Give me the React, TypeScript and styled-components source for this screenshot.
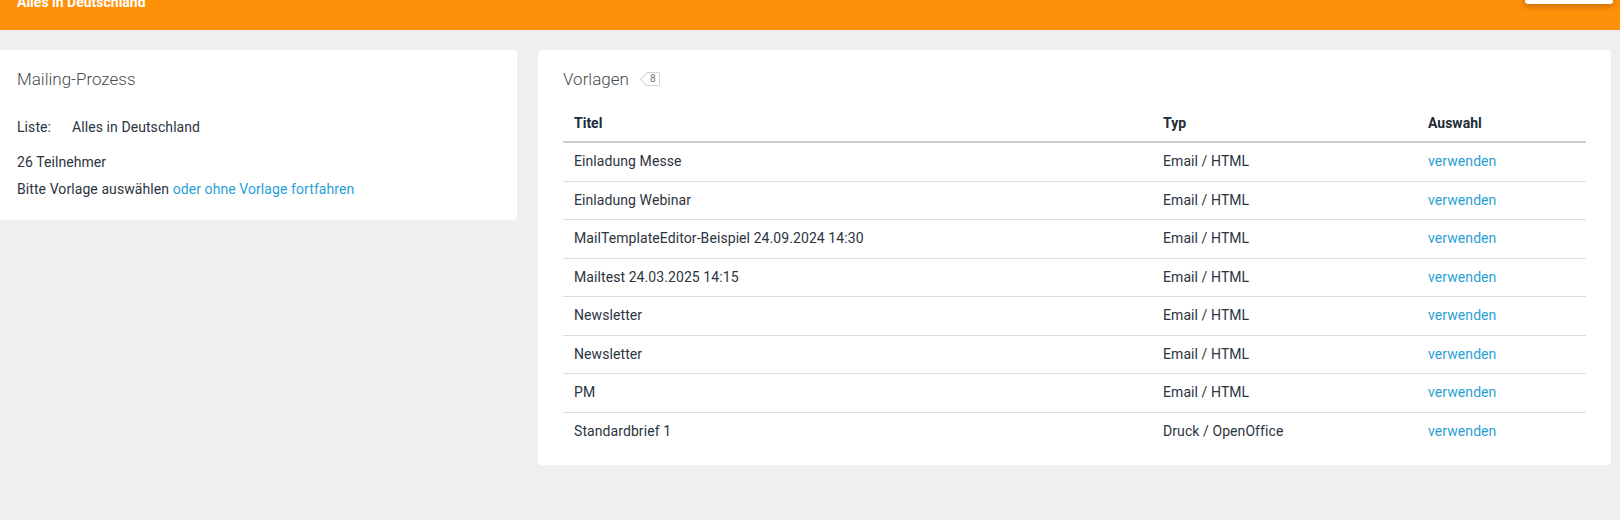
import styled, { createGlobalStyle } from "styled-components";

const GlobalStyle = createGlobalStyle`
  html, body {
    margin: 0;
    padding: 0;
    background: #efeff1;
    font-family: Roboto, "Liberation Sans", Arial, sans-serif;
    font-size: 14px;
    color: #2b3441;
    overflow: hidden;
  }
`;

const Page = styled.div`
  width: 1620px;
  height: 520px;
  overflow: hidden;
`;

const Topbar = styled.header`
  height: 30px;
  background: #ff9009;
  display: flex;
  justify-content: space-between;
  align-items: flex-start;
  padding: 0 7px 0 17px;
  overflow: hidden;
`;

const TopTitle = styled.div`
  color: #fff;
  font-weight: 700;
  font-size: 14px;
  line-height: 20px;
  margin-top: -8px;
`;

const TopButton = styled.div`
  width: 88px;
  height: 30px;
  margin-top: -26px;
  background: #fff;
  border-radius: 3px;
  box-shadow: 0 2px 6px rgba(120, 60, 0, 0.45);
`;

const Content = styled.main`
  display: flex;
  align-items: flex-start;
  gap: 21px;
  margin-left: -8px;
  padding: 20px 9px 0 0;
`;

const Card = styled.section<{ $width?: number; $padBottom: number }>`
  background: #fff;
  border-radius: 4px;
  padding: 18px 25px ${({ $padBottom }) => $padBottom}px;
  box-sizing: border-box;
  ${({ $width }) => ($width ? `width: ${$width}px;` : "flex: 1;")}
`;

const CardTitle = styled.h2`
  margin: 0;
  font-size: 17px;
  font-weight: 300;
  line-height: 22px;
  color: #474c52;
  display: flex;
  align-items: center;
`;

const Line = styled.div<{ $gap: number }>`
  line-height: 20px;
  margin-top: ${({ $gap }) => $gap}px;
  letter-spacing: 0.08px;
`;

const Label = styled.span`
  display: inline-block;
  width: 55px;
`;

const Link = styled.a`
  color: #2a9fd6;
  text-decoration: none;
  cursor: pointer;
`;

const Badge = styled.span`
  position: relative;
  display: inline-block;
  margin-left: 17px;
  height: 12px;
  min-width: 8px;
  padding: 0 2px 0 3px;
  border: 1px solid #cfd2d6;
  border-left: none;
  border-radius: 0 2px 2px 0;
  font-size: 10px;
  font-weight: 400;
  line-height: 12px;
  color: #6f747b;
  text-align: center;

  &::before {
    content: "";
    position: absolute;
    left: -4px;
    top: 1.5px;
    width: 8px;
    height: 8px;
    border-left: 1px solid #cfd2d6;
    border-bottom: 1px solid #cfd2d6;
    transform: rotate(45deg);
    background: #fff;
  }
`;

const BadgeText = styled.span`
  position: relative;
  z-index: 1;
`;

const Table = styled.table`
  width: 100%;
  margin-top: 15px;
  border-collapse: collapse;
  table-layout: fixed;
`;

const Th = styled.th<{ $width?: number }>`
  box-sizing: border-box;
  text-align: left;
  font-weight: 700;
  color: #222b37;
  padding: 8px 11px;
  line-height: 20px;
  border-bottom: 2px solid #cccccc;
  ${({ $width }) => ($width ? `width: ${$width}px;` : "")}
`;

const Tr = styled.tr`
  & + & td {
    border-top: 1px solid #dddddd;
  }
`;

const Td = styled.td`
  padding: 8px 11px;
  line-height: 21.5px;
  vertical-align: top;
  letter-spacing: 0.08px;
`;

const templates = [
  { title: "Einladung Messe", type: "Email / HTML" },
  { title: "Einladung Webinar", type: "Email / HTML" },
  { title: "MailTemplateEditor-Beispiel 24.09.2024 14:30", type: "Email / HTML" },
  { title: "Mailtest 24.03.2025 14:15", type: "Email / HTML" },
  { title: "Newsletter", type: "Email / HTML" },
  { title: "Newsletter", type: "Email / HTML" },
  { title: "PM", type: "Email / HTML" },
  { title: "Standardbrief 1", type: "Druck / OpenOffice" },
];

function App() {
  return (
    <Page>
      <GlobalStyle />
      <Topbar>
        <TopTitle>Alles in Deutschland</TopTitle>
        <TopButton />
      </Topbar>
      <Content>
        <Card $width={525} $padBottom={21}>
          <CardTitle>Mailing-Prozess</CardTitle>
          <Line $gap={27}>
            <Label>Liste:</Label>
            Alles in Deutschland
          </Line>
          <Line $gap={15}>26 Teilnehmer</Line>
          <Line $gap={7}>
            Bitte Vorlage auswählen <Link>oder ohne Vorlage fortfahren</Link>
          </Line>
        </Card>
        <Card $padBottom={15}>
          <CardTitle>
            Vorlagen
            <Badge>
              <BadgeText>8</BadgeText>
            </Badge>
          </CardTitle>
          <Table>
            <thead>
              <tr>
                <Th $width={589}>Titel</Th>
                <Th $width={265}>Typ</Th>
                <Th>Auswahl</Th>
              </tr>
            </thead>
            <tbody>
              {templates.map((t, i) => (
                <Tr key={i}>
                  <Td>{t.title}</Td>
                  <Td>{t.type}</Td>
                  <Td>
                    <Link>verwenden</Link>
                  </Td>
                </Tr>
              ))}
            </tbody>
          </Table>
        </Card>
      </Content>
    </Page>
  );
}

export default App;
